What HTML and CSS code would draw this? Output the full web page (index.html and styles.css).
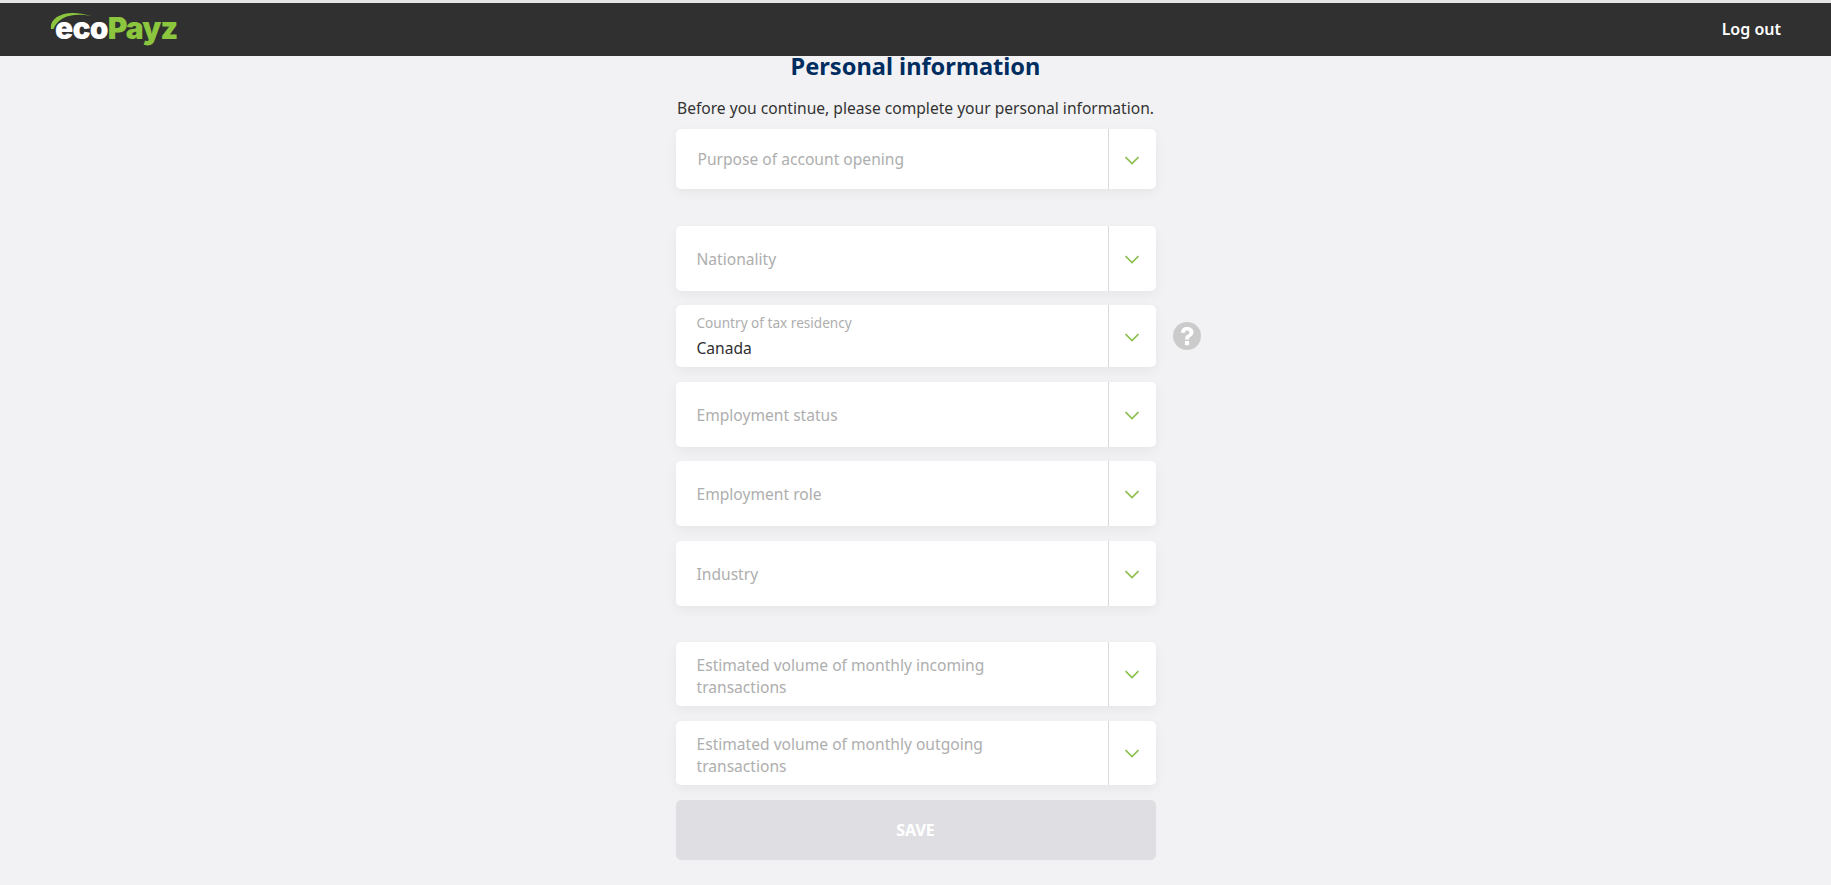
FILE: index.html
```html
<!DOCTYPE html>
<html lang="en">
<head>
<meta charset="UTF-8">
<title>Personal information</title>
<link rel="stylesheet" href="styles.css">
</head>
<body>
    <header class="topbar">
        <a class="logo" href="#">
            <svg class="logo-swoosh" width="42" height="22" viewBox="0 0 42 22">
                <path d="M1 19C-1 7 16 -2 41 6C22 2 8 7 3.5 19Z" fill="#8cc63f"/>
            </svg>
            <span class="logo-eco">eco</span><span class="logo-payz">Payz</span>
        </a>
        <a class="logout" href="#">Log out</a>
    </header>

    <main class="form">
        <h1>Personal information</h1>
        <p class="intro">Before you continue, please complete your personal information.</p>

        <div class="field short">
            <div class="value first">Purpose of account opening</div>
            <div class="arrow"><svg width="14" height="9" viewBox="0 0 14 9"><path d="M0.5 1L7 7.5L13.5 1" fill="none" stroke="#8dc04f" stroke-width="1.7"/></svg></div>
        </div>

        <div class="field gap-top">
            <div class="value">Nationality</div>
            <div class="arrow"><svg width="14" height="9" viewBox="0 0 14 9"><path d="M0.5 1L7 7.5L13.5 1" fill="none" stroke="#8dc04f" stroke-width="1.7"/></svg></div>
        </div>

        <div class="field filled">
            <div class="value">
                <span class="small-label">Country of tax residency</span>
                <span class="chosen">Canada</span>
            </div>
            <div class="arrow"><svg width="14" height="9" viewBox="0 0 14 9"><path d="M0.5 1L7 7.5L13.5 1" fill="none" stroke="#8dc04f" stroke-width="1.7"/></svg></div>
            <svg class="help" width="28" height="28" viewBox="0 0 28 28">
                <circle cx="14" cy="14" r="14" fill="#cbcbcb"/>
                <path d="M8 10.8C8 7 10.5 5 14 5C18 5 20.5 7 20.5 10.2C20.5 12.6 19 13.8 17.6 14.8C16.4 15.6 16 16.2 16 17.6H12C12 15.4 12.6 14.2 14.2 13.1C15.6 12.1 16.4 11.6 16.4 10.4C16.4 9.2 15.5 8.4 14.1 8.4C12.6 8.4 11.8 9.4 11.7 11Z" fill="#fff"/>
                <rect x="11.9" y="19" width="4.2" height="4.2" fill="#fff"/>
            </svg>
        </div>

        <div class="field">
            <div class="value">Employment status</div>
            <div class="arrow"><svg width="14" height="9" viewBox="0 0 14 9"><path d="M0.5 1L7 7.5L13.5 1" fill="none" stroke="#8dc04f" stroke-width="1.7"/></svg></div>
        </div>

        <div class="field role">
            <div class="value">Employment role</div>
            <div class="arrow"><svg width="14" height="9" viewBox="0 0 14 9"><path d="M0.5 1L7 7.5L13.5 1" fill="none" stroke="#8dc04f" stroke-width="1.7"/></svg></div>
        </div>

        <div class="field">
            <div class="value">Industry</div>
            <div class="arrow"><svg width="14" height="9" viewBox="0 0 14 9"><path d="M0.5 1L7 7.5L13.5 1" fill="none" stroke="#8dc04f" stroke-width="1.7"/></svg></div>
        </div>

        <div class="field tall-text incoming">
            <div class="value">Estimated volume of monthly incoming<br>transactions</div>
            <div class="arrow"><svg width="14" height="9" viewBox="0 0 14 9"><path d="M0.5 1L7 7.5L13.5 1" fill="none" stroke="#8dc04f" stroke-width="1.7"/></svg></div>
        </div>

        <div class="field tall-text">
            <div class="value">Estimated volume of monthly outgoing<br>transactions</div>
            <div class="arrow"><svg width="14" height="9" viewBox="0 0 14 9"><path d="M0.5 1L7 7.5L13.5 1" fill="none" stroke="#8dc04f" stroke-width="1.7"/></svg></div>
        </div>

        <button class="save" disabled>SAVE</button>
    </main>
</body>
</html>
```

FILE: styles.css
```css
html, body {
    margin: 0;
    height: 885px;
    overflow: hidden;
}
body {
    font-family: "Noto Sans", Arial, sans-serif;
    background: #f2f2f4;
    color: #333;
    border-top: 3px solid #e4e4e4;
    box-sizing: border-box;
}
.topbar {
    height: 53px;
    background: #303030;
    display: flex;
    align-items: center;
    justify-content: space-between;
    padding: 0 50px;
}
.logo {
    position: relative;
    display: flex;
    align-items: baseline;
    text-decoration: none;
    font-family: Inter, Arial, sans-serif;
    font-weight: 900;
    font-size: 30px;
    letter-spacing: -0.8px;
    line-height: 36px;
    margin-top: -3px;
}
.logo-swoosh {
    position: absolute;
    left: 0;
    top: 0;
}
.logo-eco {
    color: #fff;
    margin-left: 5px;
}
.logo-payz {
    color: #8cc63f;
}
.logout {
    color: #fff;
    font-size: 16px;
    font-weight: 600;
    text-decoration: none;
    margin-top: -1px;
}
.form {
    width: 480px;
    margin: 0 auto;
    display: flex;
    flex-direction: column;
}
h1 {
    margin: 0;
    height: 23px;
    font-size: 23.6px;
    font-weight: 700;
    line-height: 21px;
    text-align: center;
    color: #002d5f;
}
.intro {
    margin: 18px 0 10px;
    font-size: 15.6px;
    line-height: 22px;
    text-align: center;
    white-space: nowrap;
}
.field {
    position: relative;
    display: flex;
    height: 65px;
    margin-bottom: 14px;
    background: #fff;
    border-radius: 5px;
    box-shadow: 0 4px 12px rgba(0, 0, 0, 0.05);
}
.field.short {
    height: 60px;
}
.field.filled {
    height: 62px;
    margin-bottom: 15px;
}
.field.role {
    margin-bottom: 15px;
}
.field.tall-text {
    height: 64px;
    margin-bottom: 15px;
}
.field.tall-text .value {
    padding-top: 4px;
}
.field.tall-text .arrow {
    padding-top: 0;
}
.field.gap-top {
    margin-top: 23px;
}
.field.incoming {
    margin-top: 22px;
}
.value {
    flex: 1;
    display: flex;
    flex-direction: column;
    justify-content: center;
    padding-left: 21px;
    font-size: 15.6px;
    line-height: 22px;
    color: #aeaeae;
}
.value.first {
    padding-left: 22px;
}
.small-label {
    font-size: 13.6px;
    line-height: 20px;
}
.chosen {
    color: #2f2f2f;
    margin-top: 4px;
}
.arrow {
    width: 47px;
    padding-top: 2px;
    border-left: 1px solid #d9d9d9;
    display: flex;
    align-items: center;
    justify-content: center;
}
.help {
    position: absolute;
    left: 497px;
    top: 17px;
}
.save {
    height: 60px;
    border: none;
    border-radius: 5px;
    background: #dfdfe3;
    color: #fff;
    font-family: inherit;
    font-size: 16px;
    font-weight: 700;
}
```
